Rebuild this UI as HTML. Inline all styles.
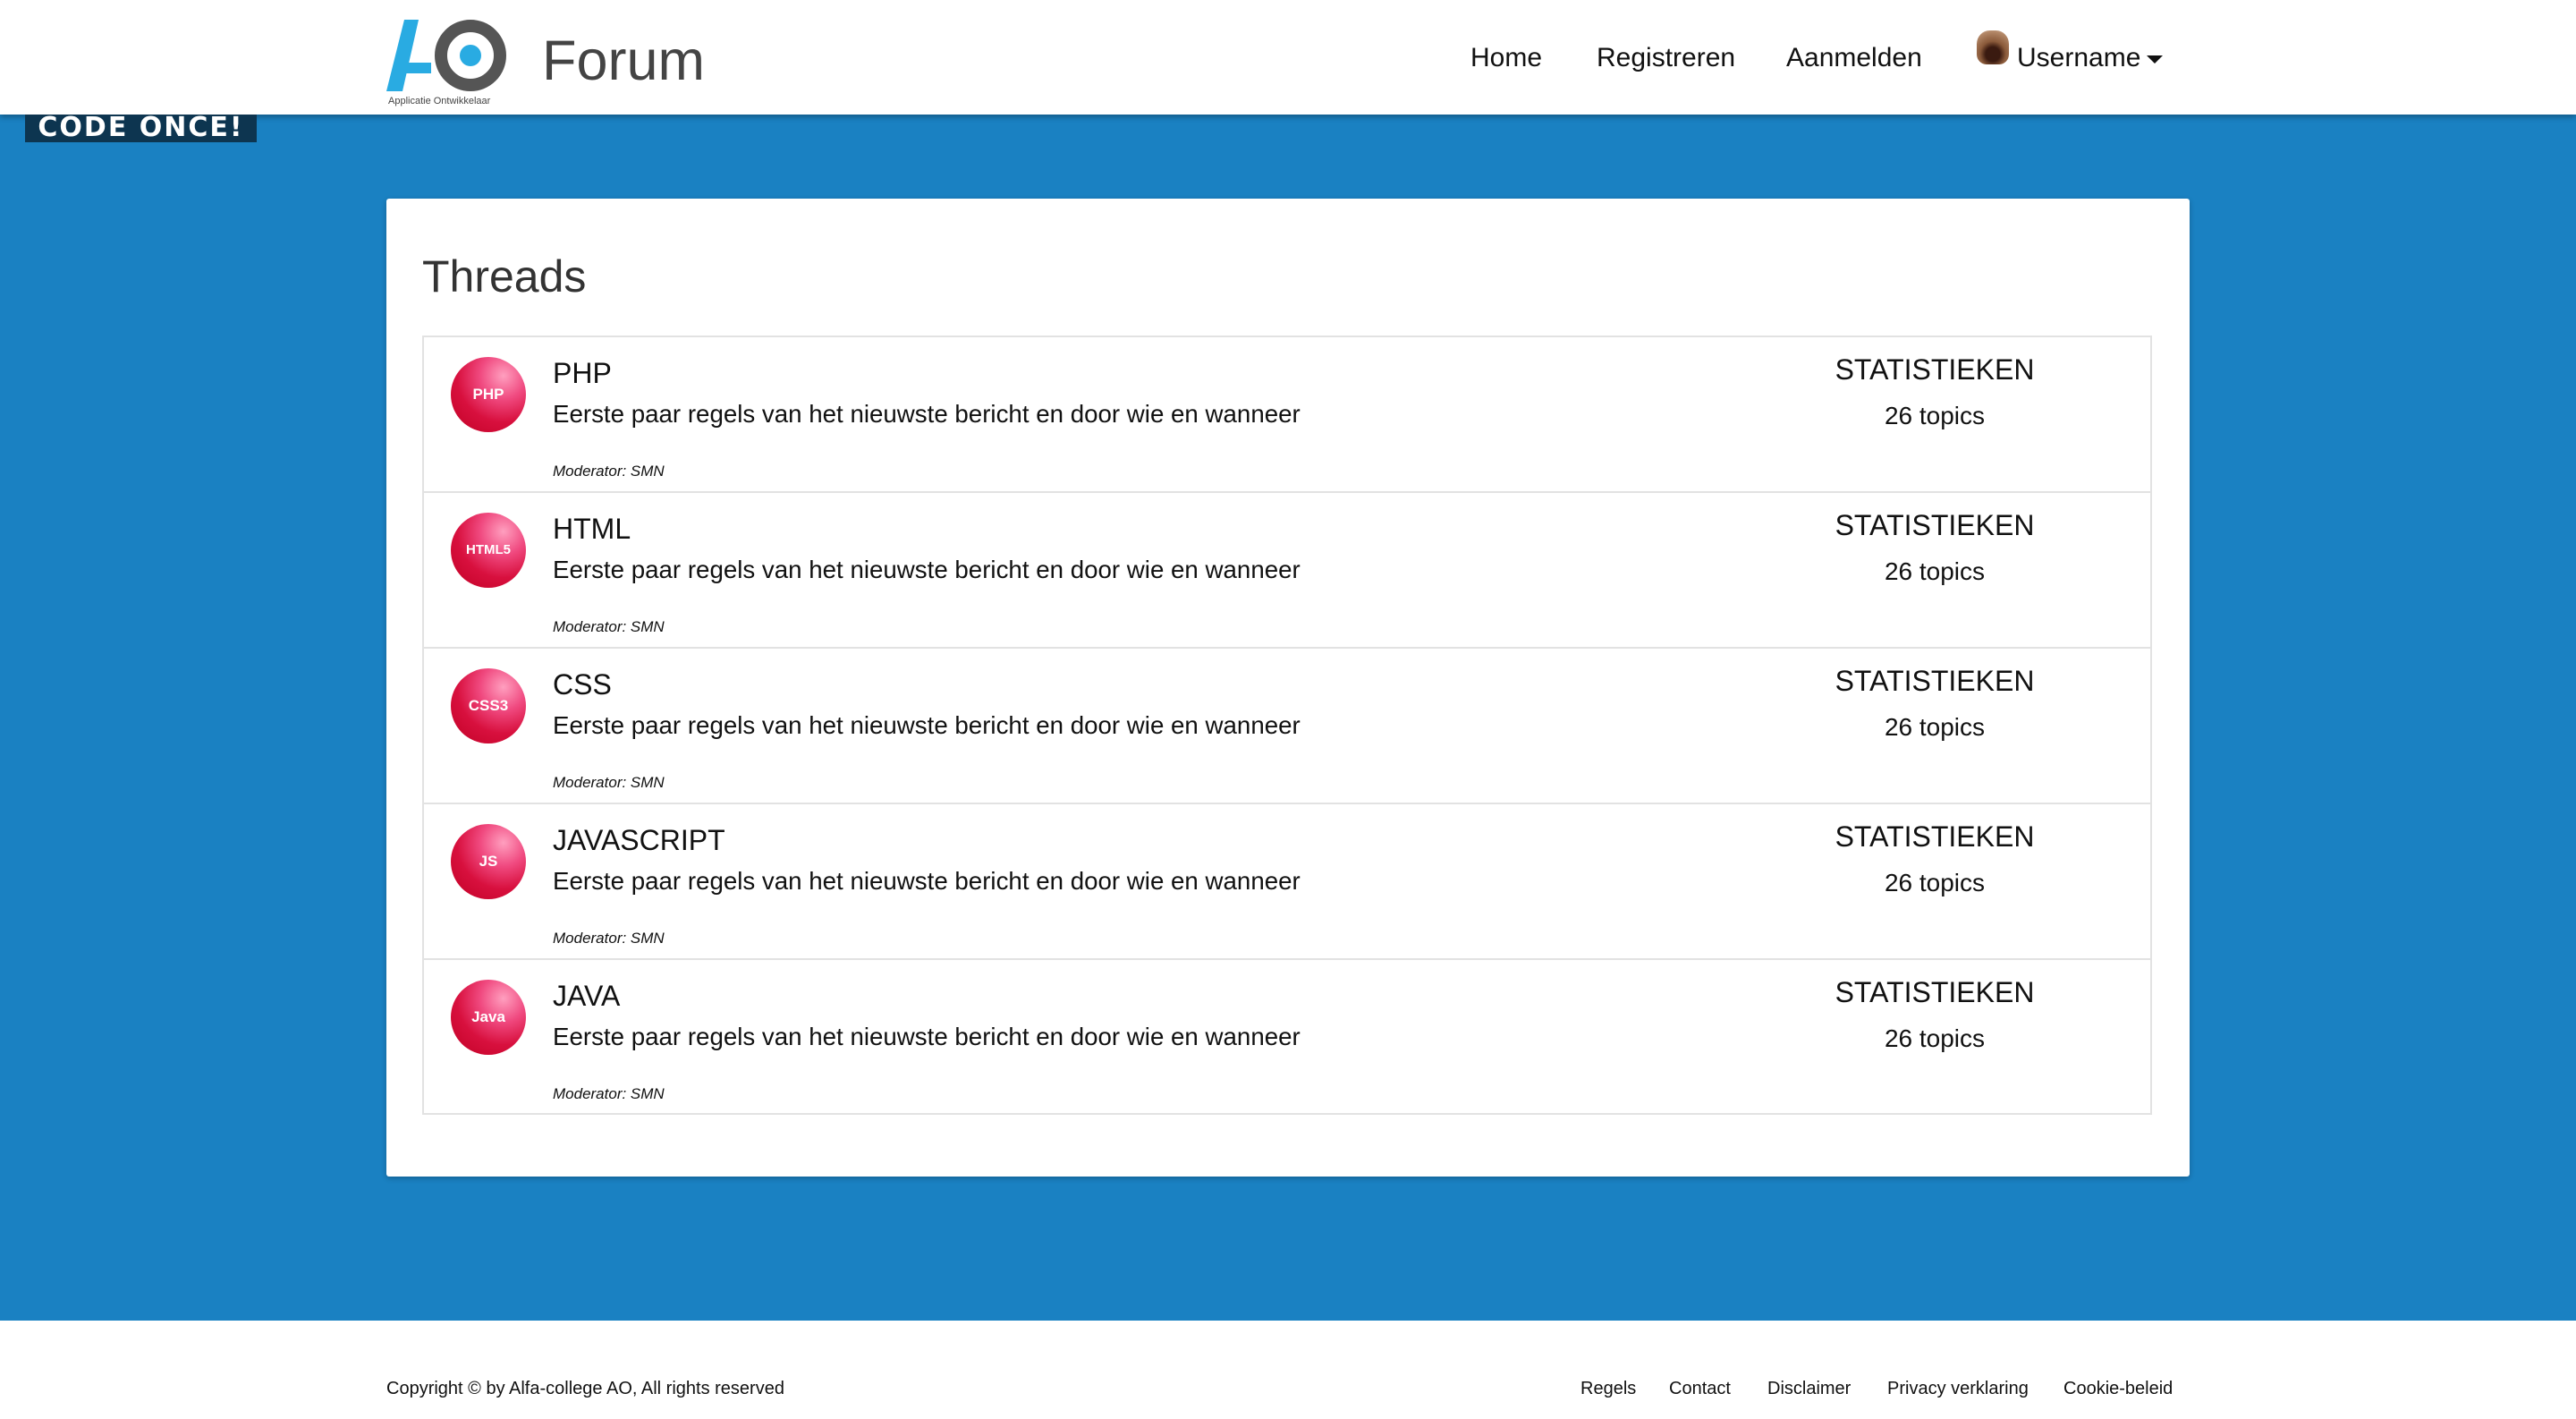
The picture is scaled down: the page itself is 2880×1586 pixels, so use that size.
<!DOCTYPE html>
<html><head><meta charset="utf-8"><style>
*{margin:0;padding:0;box-sizing:border-box}
body{width:2880px;height:1586px;position:relative;background:#1a81c2;font-family:"Liberation Sans",sans-serif;color:#111;overflow:hidden}
.a{position:absolute;white-space:nowrap}
header{position:absolute;left:0;top:0;width:2880px;height:128px;background:#fff;box-shadow:0 3px 6px rgba(0,0,0,.3)}
.nav{font-size:30px;top:48px}
.card{position:absolute;left:432px;top:222px;width:2016px;height:1093px;background:#fff;border-radius:3px;box-shadow:0 2px 6px rgba(0,0,0,.25)}
.list{position:absolute;left:40px;top:153px;width:1934px;height:871px;border:2px solid #e2e2e2}
.row{position:absolute;left:0;width:100%;height:174px;border-bottom:2px solid #e2e2e2}
.ic{position:absolute;left:30px;top:22px;width:84px;height:84px;border-radius:50%;background:radial-gradient(circle at 70% 25%,#ff9fbf 0,#f04a80 30%,#d8103e 60%,#c00024 100%);color:#fff;font-size:17px;font-weight:bold;text-align:center;line-height:84px}
.t{left:144px;top:22px;font-size:32px}
.d{left:144px;top:70px;font-size:27.7px}
.m{left:144px;top:140px;font-size:17px;font-style:italic}
.s{left:1573px;width:232px;text-align:center;top:18px;font-size:32px}
.n{left:1573px;width:232px;text-align:center;top:72px;font-size:28px}
footer{position:absolute;left:0;top:1476px;width:2880px;height:110px;background:#fff}
.f{top:65px;font-size:20px}
</style></head><body>
<header>
<svg class="a" style="left:432px;top:20px" width="140" height="100" viewBox="0 0 140 100">
<polygon points="20,2 36,2 18,82 0,82" fill="#29abe2"/>
<polygon points="12,50 50,50 50,62 10,62" fill="#29abe2"/>
<circle cx="94" cy="42" r="33" fill="none" stroke="#555" stroke-width="14"/>
<circle cx="94" cy="42" r="12" fill="#29abe2"/>
<text x="2" y="96" font-size="11" fill="#444" font-family="Liberation Sans">Applicatie Ontwikkelaar</text>
</svg>
<div class="a" style="left:606px;top:32px;font-size:63px;color:#444">Forum</div>
<div class="a nav" style="left:1644px">Home</div>
<div class="a nav" style="left:1785px">Registreren</div>
<div class="a nav" style="left:1997px">Aanmelden</div>
<div class="a" style="left:2210px;top:34px;width:36px;height:38px;border-radius:40% 40% 30% 30%;background:radial-gradient(circle at 50% 70%,#3a1a10 0,#3a1a10 25%,#8a5a3a 45%,#b58a6a 80%,#fff 100%)"></div>
<div class="a nav" style="left:2255px">Username</div>
<div class="a" style="left:2400px;top:62px;width:0;height:0;border-left:9px solid transparent;border-right:9px solid transparent;border-top:9px solid #111"></div>
</header>
<div class="a" style="left:28px;top:128px;width:259px;height:31px;background:#0d3550;color:#fff;font-weight:900;font-size:30px;line-height:30px;text-align:center;letter-spacing:2px;font-family:'DejaVu Sans',sans-serif">CODE ONCE!</div>
<div class="card">
<div class="a" style="left:40px;top:58px;font-size:50px;color:#333">Threads</div>
<div class="list">
<div class="row" style="top:0"><div class="ic">PHP</div><div class="a t">PHP</div><div class="a d">Eerste paar regels van het nieuwste bericht en door wie en wanneer</div><div class="a m">Moderator: SMN</div><div class="a s">STATISTIEKEN</div><div class="a n">26 topics</div></div>
<div class="row" style="top:174px"><div class="ic" style="font-size:15px">HTML5</div><div class="a t">HTML</div><div class="a d">Eerste paar regels van het nieuwste bericht en door wie en wanneer</div><div class="a m">Moderator: SMN</div><div class="a s">STATISTIEKEN</div><div class="a n">26 topics</div></div>
<div class="row" style="top:348px"><div class="ic">CSS3</div><div class="a t">CSS</div><div class="a d">Eerste paar regels van het nieuwste bericht en door wie en wanneer</div><div class="a m">Moderator: SMN</div><div class="a s">STATISTIEKEN</div><div class="a n">26 topics</div></div>
<div class="row" style="top:522px"><div class="ic">JS</div><div class="a t">JAVASCRIPT</div><div class="a d">Eerste paar regels van het nieuwste bericht en door wie en wanneer</div><div class="a m">Moderator: SMN</div><div class="a s">STATISTIEKEN</div><div class="a n">26 topics</div></div>
<div class="row" style="top:696px;border-bottom:none"><div class="ic">Java</div><div class="a t">JAVA</div><div class="a d">Eerste paar regels van het nieuwste bericht en door wie en wanneer</div><div class="a m">Moderator: SMN</div><div class="a s">STATISTIEKEN</div><div class="a n">26 topics</div></div>
</div>
</div>
<footer>
<div class="a f" style="left:432px">Copyright © by Alfa-college AO, All rights reserved</div>
<div class="a f" style="left:1767px">Regels</div>
<div class="a f" style="left:1866px">Contact</div>
<div class="a f" style="left:1976px">Disclaimer</div>
<div class="a f" style="left:2110px">Privacy verklaring</div>
<div class="a f" style="left:2307px">Cookie-beleid</div>
</footer>
</body></html>
